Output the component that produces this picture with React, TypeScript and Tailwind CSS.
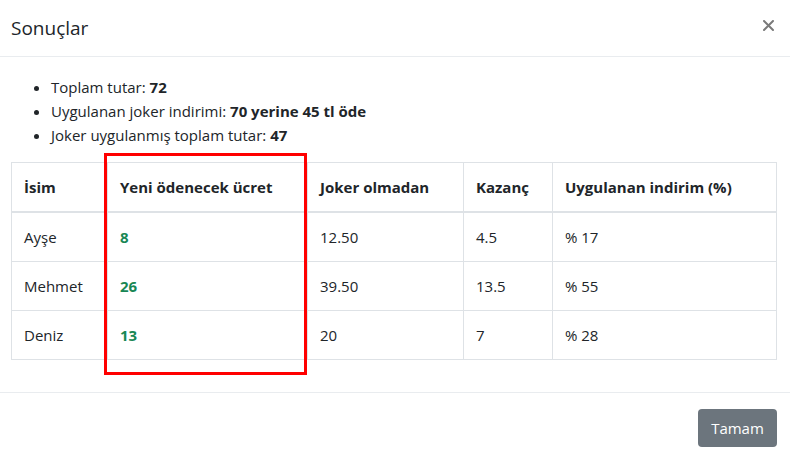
export default function App() {
  const rows = [
    { name: "Ayşe", yeni: "8", joker: "12.50", kazanc: "4.5", indirim: "% 17" },
    { name: "Mehmet", yeni: "26", joker: "39.50", kazanc: "13.5", indirim: "% 55" },
    { name: "Deniz", yeni: "13", joker: "20", kazanc: "7", indirim: "% 28" },
  ];
  const cell = "border border-[#dee2e6] px-3 py-3 leading-6 text-left align-top";
  return (
    <div className="w-[790px] h-[462px] bg-white text-[#212529] overflow-hidden font-['Open_Sans',sans-serif] text-[15px]">
      <div className="h-[57px] flex items-center justify-between pl-[11px] pr-[16px] border-b border-[#e9ecef]">
        <h5 className="text-[19px] leading-6 font-normal">Sonuçlar</h5>
        <svg width="11" height="11" viewBox="0 0 11 11" className="-mt-[5px] mr-[0px]">
          <path d="M1 1 L10 10 M10 1 L1 10" stroke="#7a7a7a" strokeWidth="2" strokeLinecap="round" />
        </svg>
      </div>
      <div className="pl-[11px] pr-[13px] pt-[18px]">
        <ul className="list-disc pl-[40px] mb-[15px] leading-6">
          <li>Toplam tutar: <b>72</b></li>
          <li>Uygulanan joker indirimi: <b>70 yerine 45 tl öde</b></li>
          <li>Joker uygulanmış toplam tutar: <b>47</b></li>
        </ul>
        <div className="relative">
          <table className="w-full border-collapse border border-[#dee2e6]">
            <thead>
              <tr>
                <th className={`${cell} w-[96px] border-b-2 font-bold`}>İsim</th>
                <th className={`${cell} w-[200px] border-b-2 font-bold`}>Yeni ödenecek ücret</th>
                <th className={`${cell} w-[156px] border-b-2 font-bold`}>Joker olmadan</th>
                <th className={`${cell} w-[89px] border-b-2 font-bold`}>Kazanç</th>
                <th className={`${cell} border-b-2 font-bold`}>Uygulanan indirim (%)</th>
              </tr>
            </thead>
            <tbody>
              {rows.map((r) => (
                <tr key={r.name}>
                  <td className={cell}>{r.name}</td>
                  <td className={`${cell} font-bold text-[#198754]`}>{r.yeni}</td>
                  <td className={cell}>{r.joker}</td>
                  <td className={cell}>{r.kazanc}</td>
                  <td className={cell}>{r.indirim}</td>
                </tr>
              ))}
            </tbody>
          </table>
          <div className="absolute left-[93px] top-[-9px] w-[203px] h-[222px] border-[3px] border-[#ff0000] pointer-events-none" />
        </div>
      </div>
      <div className="mt-[32px] border-t border-[#e9ecef] flex justify-end pr-[13px] pt-[16px]">
        <button className="w-[79px] h-[38px] rounded bg-[#6c757d] text-white text-[15px]">Tamam</button>
      </div>
    </div>
  );
}
